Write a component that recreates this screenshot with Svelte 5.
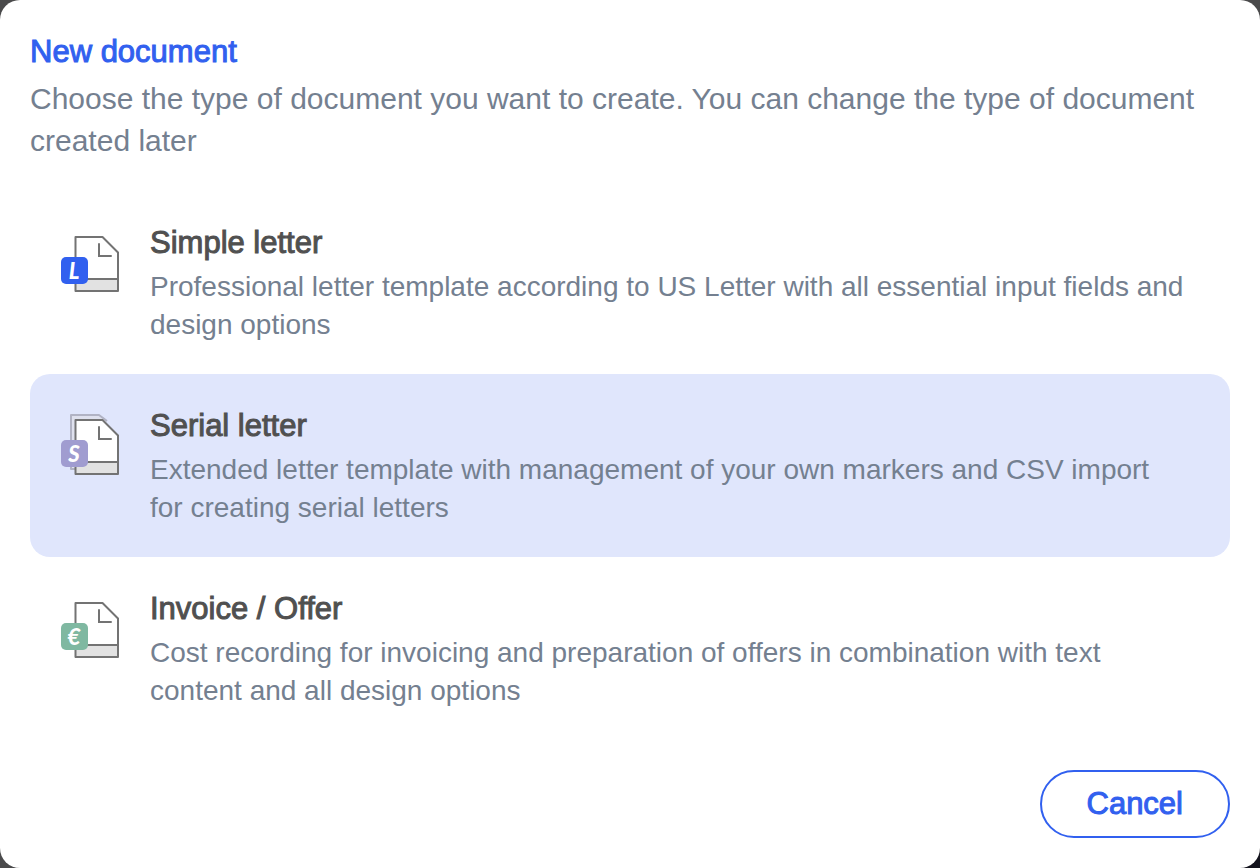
<script>
  let selected = $state('serial');

  const types = [
    {
      id: 'simple',
      title: 'Simple letter',
      text: 'Professional letter template according to US Letter with all essential input fields and design options',
      mark: 'L',
      color: '#3160ef',
    },
    {
      id: 'serial',
      title: 'Serial letter',
      text: 'Extended letter template with management of your own markers and CSV import for creating serial letters',
      mark: 'S',
      color: '#a09cd0',
      stacked: true,
    },
    {
      id: 'invoice',
      title: 'Invoice / Offer',
      text: 'Cost recording for invoicing and preparation of offers in combination with text content and all design options',
      mark: '€',
      color: '#7fb8a1',
    },
  ];
</script>

<div class="backdrop">
  <div class="dialog" role="dialog" aria-labelledby="dialog-title">
    <header>
      <h1 id="dialog-title">New document</h1>
      <p>Choose the type of document you want to create. You can change the type of document created later</p>
    </header>

    <div class="types">
      {#each types as type (type.id)}
        <button
          class="type"
          class:selected={selected === type.id}
          onclick={() => (selected = type.id)}
        >
          <svg class="icon" width="60" height="64" viewBox="0 0 60 64" aria-hidden="true">
            {#if type.stacked}
              <path
                d="M17 57h-6V3h28l8 6"
                fill="#dfe1ee"
                stroke="#b1b3c4"
                stroke-width="2"
                stroke-linejoin="round"
              />
            {/if}
            <path d="M15.5 8h27L58 23.500V62H15.500z" fill="#fff" />
            <path d="M15.5 50H58v12H15.500z" fill="#e2e2e2" />
            <path
              d="M15.5 8h27L58 23.500V62H15.500zM15.500 50H58"
              fill="none"
              stroke="#737373"
              stroke-width="2"
              stroke-linejoin="round"
            />
            <path
              d="M39 15v12h12"
              fill="none"
              stroke="#737373"
              stroke-width="2"
              stroke-linecap="round"
            />
            <rect x="1" y="28" width="27" height="27" rx="5" fill={type.color} />
            <text class="mark" x="14" y="50" text-anchor="middle">{type.mark}</text>
          </svg>
          <span class="body">
            <span class="title">{type.title}</span>
            <span class="text">{type.text}</span>
          </span>
        </button>
      {/each}
    </div>

    <footer>
      <button class="cancel">Cancel</button>
    </footer>
  </div>
</div>

<style>
  :global(body) {
    font-family: "Helvetica Neue", "Liberation Sans", Arial, sans-serif;
  }

  .backdrop {
    min-height: 100vh;
    display: flex;
    background: linear-gradient(135deg, #4a4a4b 85%, #14141e 97%);
  }

  .dialog {
    flex: 1;
    box-sizing: border-box;
    display: flex;
    flex-direction: column;
    padding: 30px;
    border-radius: 20px;
    background: #fff;
  }

  h1,
  p {
    margin: 0;
  }

  h1 {
    margin-bottom: 4px;
    font-size: 31px;
    line-height: 44px;
    font-weight: 400;
    color: #3160ef;
    -webkit-text-stroke: 1px;
  }

  header p {
    font-size: 30px;
    line-height: 42px;
    color: #748090;
  }

  .types {
    display: flex;
    flex-direction: column;
    margin-top: 29px;
  }

  .type {
    display: flex;
    align-items: flex-start;
    gap: 30px;
    padding: 30px 44px 30px 30px;
    border: none;
    border-radius: 20px;
    background: transparent;
    font: inherit;
    text-align: left;
    cursor: pointer;
  }

  .type.selected {
    background: #e0e6fc;
  }

  .icon {
    flex: none;
    margin-top: 8px;
  }

  .mark {
    font-family: Lato, sans-serif;
    font-size: 22px;
    font-weight: 900;
    font-style: italic;
    fill: #fff;
  }

  .body {
    display: flex;
    flex-direction: column;
    gap: 3px;
  }

  .title {
    font-size: 31px;
    line-height: 44px;
    color: #505050;
    -webkit-text-stroke: 1px;
  }

  .text {
    font-size: 28px;
    line-height: 38px;
    color: #748090;
  }

  footer {
    display: flex;
    justify-content: flex-end;
    margin-top: auto;
    padding-top: 30px;
  }

  .cancel {
    padding: 10px 45px;
    border: 2px solid #3160ef;
    border-radius: 34px;
    background: #fff;
    font: inherit;
    font-size: 31px;
    line-height: 44px;
    color: #3160ef;
    -webkit-text-stroke: 1px;
    cursor: pointer;
  }
</style>
